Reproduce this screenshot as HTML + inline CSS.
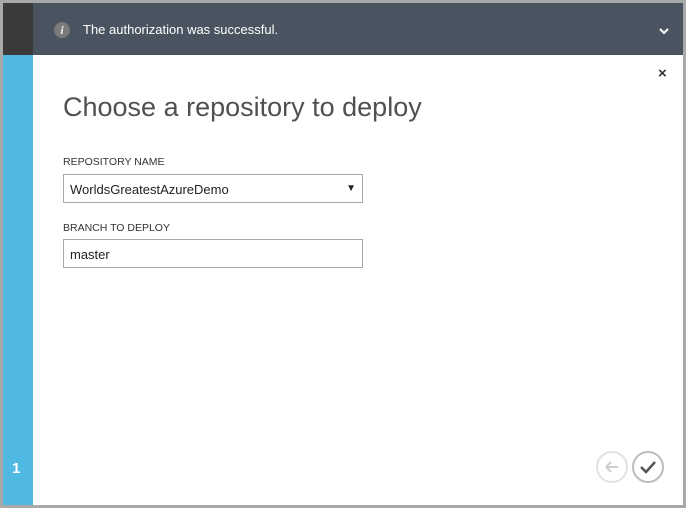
<!DOCTYPE html>
<html><head><style>
*{margin:0;padding:0;box-sizing:border-box}
body{width:686px;height:508px;background:#a9a9a9;position:relative;overflow:hidden;font-family:"Liberation Sans",sans-serif}
.main{position:absolute;left:3px;top:3px;width:680px;height:502px;background:#fff}
.dark{position:absolute;left:0;top:0;width:30px;height:52px;background:#3a3a3a}
.banner{position:absolute;left:30px;top:0;width:650px;height:52px;background:#4a5460;color:#fff;font-size:13px}
.blue{position:absolute;left:0;top:52px;width:30px;height:450px;background:#4fb8e3}
.lbl{position:absolute;font-size:10.5px;color:#333}
.box{position:absolute;left:60px;width:300px;height:29px;border:1px solid #a8a8a8;font-size:13px;color:#222;padding:7px 0 0 6px}
</style></head><body>
<div class="main">
<div class="dark"></div>
<div class="banner">
<div style="position:absolute;left:21px;top:19px;width:16px;height:16px;border-radius:50%;background:#7a7a7a;color:#eee;font:italic bold 12px 'Liberation Serif',serif;text-align:center;line-height:16px">i</div>
<div style="position:absolute;left:50px;top:19px">The authorization was successful.</div>
<svg style="position:absolute;left:626px;top:24px" width="10" height="8"><path d="M1 2l4 4 4-4" stroke="#fff" stroke-width="2" fill="none"/></svg>
</div>
<div class="blue"><div style="position:absolute;left:9px;top:405px;color:#fff;font-weight:bold;font-size:15px">1</div></div>
<div style="position:absolute;left:655px;top:62px;font-size:15px;color:#333;font-weight:bold">×</div>
<div style="position:absolute;left:60px;top:89px;font-size:27px;color:#505050;font-weight:300">Choose a repository to deploy</div>
<div class="lbl" style="left:60px;top:153px">REPOSITORY NAME</div>
<div class="box" style="top:171px">WorldsGreatestAzureDemo<span style="position:absolute;right:6px;top:8px;font-size:10px">▼</span></div>
<div class="lbl" style="left:60px;top:219px">BRANCH TO DEPLOY</div>
<div class="box" style="top:236px">master</div>
<svg style="position:absolute;left:592px;top:448px" width="72" height="34">
<circle cx="17" cy="16" r="15" fill="none" stroke="#e2e2e2" stroke-width="2"/>
<path d="M11 16h12M11 16l5-5M11 16l5 5" stroke="#cfcfcf" stroke-width="2" fill="none"/>
<circle cx="53" cy="16" r="15" fill="none" stroke="#bdbdbd" stroke-width="2"/>
<path d="M46 16l5 5 9-10" stroke="#555" stroke-width="2.5" fill="none"/>
</svg>
</div>
</body></html>
